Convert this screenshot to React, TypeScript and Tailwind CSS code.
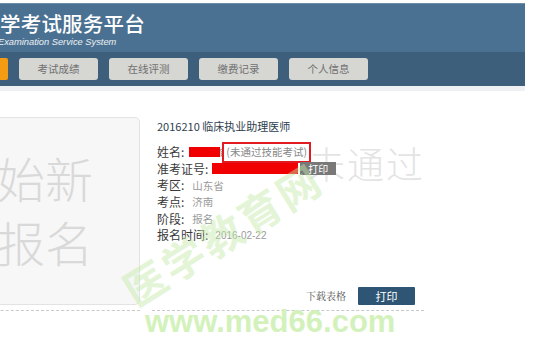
import React from "react";

const cjk = "font-['Noto_Sans_CJK_SC','Noto_Sans',sans-serif]";

function NavBtn({ label }: { label: string }) {
  return (
    <div className="w-[79px] h-[22px] rounded-[3px] bg-[#d6d6d3] flex items-center justify-center text-[10.5px] text-[#707070] shrink-0">
      {label}
    </div>
  );
}

function Row({ label, children }: { label: string; children?: React.ReactNode }) {
  return (
    <div className="h-[16.6px] flex items-center">
      <span className="text-[12px] text-[#3a3a3a] leading-none">{label}</span>
      {children}
    </div>
  );
}

export default function App() {
  return (
    <div className={`w-[550px] h-[349px] bg-white overflow-hidden relative ${cjk}`}>
      <div className="pt-[3px] w-[525px]">
        <div className="h-[49px] bg-[#4a7191] border-t border-[#6d8fab] flex flex-col pt-[7px]">
          <div className="text-[20.5px] leading-[25px] text-white tracking-[0.2px] font-medium">学考试服务平台</div>
          <div className="text-[9.3px] leading-[12px] italic text-white/90 font-['Liberation_Sans',sans-serif] -ml-[2px]">
            Examination Service System
          </div>
        </div>
        <div className="h-[34px] bg-[#3e5f7b] flex items-center">
          <div className="w-[8px] h-[22px] bg-[#f39c12] rounded-r-[2px] mr-[11px]" />
          <div className="flex gap-[11px]">
            <NavBtn label="考试成绩" />
            <NavBtn label="在线评测" />
            <NavBtn label="缴费记录" />
            <NavBtn label="个人信息" />
          </div>
        </div>
        <div className="h-[5px] bg-[#eef0f1]" />
      </div>

      <div className="flex mt-[26px] -ml-[60px]">
        <div className="w-[200px] h-[188px] rounded-[5px] border border-[#e3e3e3] bg-[#f7f7f7] shrink-0 flex flex-col items-end justify-center pr-[46px] pb-[4px]">
          <div className="text-[48px] leading-[64px] text-[#d9d9d9] font-light whitespace-nowrap">开始新</div>
          <div className="text-[48px] leading-[64px] text-[#d9d9d9] font-light whitespace-nowrap">报名</div>
        </div>
        <div className="ml-[17px] w-[265px] h-[188px] flex flex-col relative">
          <div className="absolute left-[151px] top-[28px] whitespace-nowrap text-[37px] leading-none text-[#e4e4e4] font-light tracking-[2px]">未通过</div>
          <div className="relative">
            <div className="mt-[2px] text-[11px] leading-[14px] text-[#2e3e4e] whitespace-nowrap">2016210 临床执业助理医师</div>
            <div className="mt-[11px]">
              <Row label="姓名:">
                <span className="ml-[5px] w-[31px] h-[10px] bg-[#f00000]" />
                <span className="text-[10px] text-[#888] -ml-[1px] w-[3px] overflow-hidden">审</span>
                <span className="h-[21px] border-2 border-[#e21a22] bg-white px-[2px] flex items-center text-[10.5px] text-[#888] leading-none whitespace-nowrap">
                  (未通过技能考试)
                </span>
              </Row>
              <Row label="准考证号:">
                <span className="ml-[4px] w-[86px] h-[11px] bg-[#f00000]" />
                <span className="ml-[2px] w-[36px] h-[13px] bg-[#787878] text-white text-[10px] leading-none flex items-center justify-center">
                  打印
                </span>
              </Row>
              <Row label="考区:">
                <span className="ml-[8px] text-[10.5px] text-[#9a9a9a]">山东省</span>
              </Row>
              <Row label="考点:">
                <span className="ml-[8px] text-[10.5px] text-[#9a9a9a]">济南</span>
              </Row>
              <Row label="阶段:">
                <span className="ml-[8px] text-[10.5px] text-[#9a9a9a]">报名</span>
              </Row>
              <Row label="报名时间:">
                <span className="ml-[7px] text-[10px] text-[#9a9a9a] font-['Liberation_Sans',sans-serif]">2016-02-22</span>
              </Row>
            </div>
          </div>
          <div className="mt-auto flex items-center justify-end gap-[12px] pr-[7px]">
            <span className="text-[10px] text-[#555] font-['Liberation_Serif','Noto_Serif_CJK_SC',serif]">下载表格</span>
            <span className="w-[57px] h-[18px] bg-[#2e5674] rounded-[1px] text-white text-[11px] flex items-center justify-center leading-none">
              打印
            </span>
          </div>
        </div>
      </div>

      <div className="flex mt-[5px] -ml-[60px]">
        <div className="w-[200px] border-t border-dashed border-[#c9c9c9]" />
        <div className="ml-[12px] w-[272px] border-t border-dashed border-[#c9c9c9]" />
      </div>

      <div className="absolute left-[105px] top-[212px] w-[234px] whitespace-nowrap text-center text-[42px] leading-none font-bold text-[#c4eba8] opacity-45 rotate-[-32deg] tracking-[3px] pointer-events-none">
        医学教育网
      </div>
      <div className="absolute left-[145px] top-[306px] whitespace-nowrap text-[31px] leading-none font-bold text-[#d3f2bb] font-['Liberation_Sans',sans-serif] pointer-events-none">
        www.med66.com
      </div>
    </div>
  );
}
